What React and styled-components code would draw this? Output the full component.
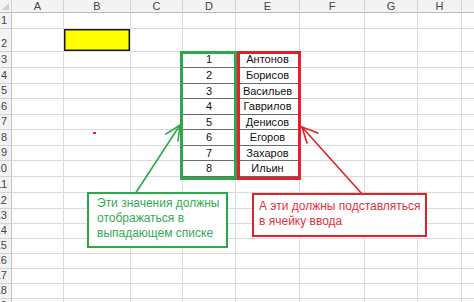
import React from 'react';
import styled, { createGlobalStyle } from 'styled-components';

const GlobalStyle = createGlobalStyle`
  html, body {
    margin: 0;
    padding: 0;
    background: #ffffff;
    overflow: hidden;
  }
  body {
    font-family: "Liberation Sans", Arial, sans-serif;
  }
`;

const COLUMNS = [
  { name: 'A', width: 52 },
  { name: 'B', width: 67 },
  { name: 'C', width: 52 },
  { name: 'D', width: 53 },
  { name: 'E', width: 64 },
  { name: 'F', width: 65 },
  { name: 'G', width: 53 },
  { name: 'H', width: 44 },
  { name: 'I', width: 40 },
];

const ROW_HEIGHTS = [16, 23, 16, 16, 15, 16, 15, 16, 15, 16, 16, 16, 15, 15, 15, 15, 15, 15, 15];

const NAMES = ['Антонов', 'Борисов', 'Васильев', 'Гаврилов', 'Денисов', 'Егоров', 'Захаров', 'Ильин'];

// values of the list D3:E10
const values = {};
NAMES.forEach((name, i) => {
  values[`D${i + 3}`] = String(i + 1);
  values[`E${i + 3}`] = name;
});

const Sheet = styled.div`
  position: relative;
  display: grid;
  grid-template-columns: 12px ${COLUMNS.map((c) => c.width + 'px').join(' ')};
  grid-template-rows: 13px ${ROW_HEIGHTS.map((h) => h + 'px').join(' ')};
  width: 474px;
  height: 302px;
  overflow: hidden;
`;

const Corner = styled.div`
  position: relative;
  background: #f3f3f3;
  border-right: 1px solid #d0d0d0;
  border-bottom: 1px solid #b8b8b8;
  box-sizing: border-box;
  &::after {
    content: '';
    position: absolute;
    right: 2px;
    bottom: 2px;
    border-left: 7px solid transparent;
    border-bottom: 7px solid #cfcfcf;
  }
`;

const ColHead = styled.div`
  display: flex;
  align-items: center;
  justify-content: center;
  background: #f3f3f3;
  border-right: 1px solid #d4d4d4;
  border-bottom: 1px solid #b8b8b8;
  box-sizing: border-box;
  color: #444;
  font-size: 11px;
  line-height: 1;
`;

const RowHead = styled.div`
  display: flex;
  align-items: flex-end;
  justify-content: flex-end;
  padding: 0 4px 2px 0;
  overflow: hidden;
  background: #f3f3f3;
  border-right: 1px solid #c4c4c4;
  border-bottom: 1px solid #d4d4d4;
  box-sizing: border-box;
  color: #444;
  font-size: 11px;
  line-height: 1;
`;

const Cell = styled.div`
  display: flex;
  align-items: center;
  justify-content: center;
  background: ${(p) => p.$fill || '#ffffff'};
  border-right: 1px solid ${(p) => (p.$ruled ? '#6a6a6a' : '#dadada')};
  border-bottom: 1px solid ${(p) => (p.$ruled ? '#6a6a6a' : '#dadada')};
  box-shadow: ${(p) => (p.$framed ? 'inset 0 0 0 1.5px #1c1c1c' : 'none')};
  box-sizing: border-box;
  color: #111;
  font-size: 11px;
  line-height: 1;
  white-space: nowrap;
`;

const Frame = styled.div`
  position: absolute;
  left: ${(p) => p.$x}px;
  top: ${(p) => p.$y}px;
  width: ${(p) => p.$w}px;
  height: ${(p) => p.$h}px;
  border: 3px solid ${(p) => p.$color};
  box-sizing: border-box;
  pointer-events: none;
`;

const Callout = styled.div`
  position: absolute;
  left: ${(p) => p.$x}px;
  top: ${(p) => p.$y}px;
  width: ${(p) => p.$w}px;
  height: ${(p) => p.$h}px;
  padding: ${(p) => p.$pad};
  border: 2px solid ${(p) => p.$color};
  box-sizing: border-box;
  background: #ffffff;
  color: ${(p) => p.$text};
  font-size: 12px;
  line-height: 15px;
`;

const Arrows = styled.svg`
  position: absolute;
  left: 0;
  top: 0;
  pointer-events: none;
`;

const GREEN = '#2aa84a';
const RED = '#e3202c';

function App() {
  return (
    <>
      <GlobalStyle />
      <Sheet>
        <Corner />
        {COLUMNS.map((c) => (
          <ColHead key={c.name}>{c.name}</ColHead>
        ))}
        {ROW_HEIGHTS.map((_, r) => {
          const row = r + 1;
          return (
            <React.Fragment key={row}>
              <RowHead>{row}</RowHead>
              {COLUMNS.map((c) => {
                const ref = `${c.name}${row}`;
                const inList = (c.name === 'D' || c.name === 'E') && row >= 3 && row <= 10;
                const isInput = ref === 'B2';
                return (
                  <Cell
                    key={ref}
                    $ruled={inList}
                    $framed={isInput}
                    $fill={isInput ? '#ffff00' : undefined}
                  >
                    {values[ref]}
                  </Cell>
                );
              })}
            </React.Fragment>
          );
        })}

        <Frame $x={180} $y={51} $w={57} $h={129} $color={GREEN} />
        <Frame $x={237} $y={51} $w={64} $h={129} $color={RED} />

        <Arrows width="474" height="302" viewBox="0 0 474 302">
          <rect x="93" y="132" width="3" height="2" fill={RED} />
          <g stroke={GREEN} strokeWidth="1.6" fill="none" strokeLinecap="round">
            <line x1="135" y1="194" x2="180" y2="125" />
            <polyline points="166,134 180,125 178,141" />
          </g>
          <g stroke={RED} strokeWidth="1.6" fill="none" strokeLinecap="round">
            <line x1="362" y1="194" x2="302" y2="127" />
            <polyline points="307,143 302,127 318,133" />
          </g>
        </Arrows>

        <Callout $x={87} $y={192} $w={141} $h={56} $pad="2px 4px 0 8px" $color={GREEN} $text="#34aa52">
          Эти значения должны
          <br />
          отображаться в
          <br />
          выпадающем списке
        </Callout>
        <Callout $x={252} $y={193} $w={175} $h={44} $pad="4px 4px 0 5px" $color={RED} $text="#e2323c">
          А эти должны подставляться
          <br />
          в ячейку ввода
        </Callout>
      </Sheet>
    </>
  );
}

export default App;
